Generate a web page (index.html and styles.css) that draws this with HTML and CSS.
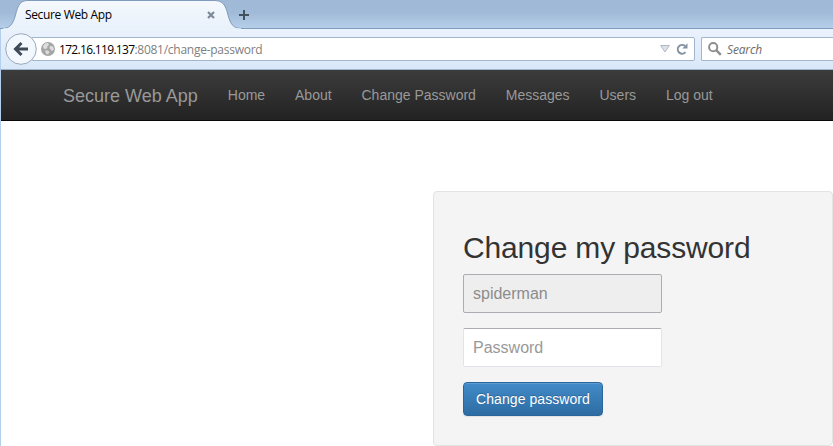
FILE: index.html
```
<!DOCTYPE html>
<html lang="en">
<head>
    <meta charset="UTF-8">
    <title>Secure Web App</title>
    <link rel="stylesheet" href="styles.css">
</head>

<body>
<div class="browser">
    <div class="tab-strip">
        <svg class="tab-shape" width="246" height="29" viewBox="0 0 246 29">
            <defs>
                <linearGradient id="tabfill" x1="0" y1="0" x2="0" y2="1">
                    <stop offset="0" stop-color="#f5f9fe"/>
                    <stop offset="1" stop-color="#e9f1fb"/>
                </linearGradient>
            </defs>
            <path d="M0 29V28.5H2C10 28.5 13 24 15.500 15C18 5 20 .5 28 .5H214C223 .5 225.500 5 228 15C230.500 24 233 28.500 242 28.5H246V29Z" fill="url(#tabfill)"/>
            <path d="M0 28.5H2C10 28.5 13 24 15.500 15C18 5 20 .5 28 .5H214C223 .5 225.500 5 228 15C230.500 24 233 28.500 242 28.5H246" fill="none" stroke="#7f9bbd"/>
            <path d="M3 29H241" stroke="#e9f1fb" stroke-width="1.5"/>
        </svg>
        <span class="tab-title">Secure Web App</span>
        <svg class="tab-close" width="8" height="8" viewBox="0 0 8 8">
            <path d="M1 1L7 7M7 1L1 7" stroke="#7d8a97" stroke-width="2.2"/>
        </svg>
        <svg class="tab-new" width="11" height="11" viewBox="0 0 11 11">
            <path d="M5 0V10M0 5H10" stroke="#43505e" stroke-width="2"/>
        </svg>
    </div>
    <div class="toolbar">
        <svg class="back" width="32" height="32" viewBox="0 0 32 32">
            <circle cx="16" cy="16" r="15.3" fill="#f3f8fe" stroke="#9aa9bb"/>
            <path d="M16.500 10L10.500 16L16.500 22M11 16H23" fill="none" stroke="#3e4a57" stroke-width="3"/>
        </svg>
        <div class="url-bar">
            <svg class="globe" width="14" height="14" viewBox="0 0 14 14">
                <circle cx="7" cy="7" r="7" fill="#a5a5a5"/>
                <path d="M2 4L4 1.5L7 1L8 3L6 4.5L6.5 6L4.5 7L2.5 6.5ZM9 4L12 4.5L13 7.5L11 9L9.5 7.5L8.5 6ZM4 8.5L7 8.5L8.5 10L7 12.5L5 11.5Z" fill="#dedede"/>
            </svg>
            <span class="url"><b>172.16.119.137</b>:8081/change-password</span>
            <svg class="dropdown" width="10" height="8" viewBox="0 0 10 8">
                <path d="M.7 .5H9.3L5 7Z" fill="#dde2e8" stroke="#b0b8c2"/>
            </svg>
            <svg class="reload" width="12" height="12" viewBox="0 0 12 12">
                <path d="M9.5 9.2A4.4 4.4 0 1 1 9 2.9" fill="none" stroke="#8493a3" stroke-width="2"/>
                <path d="M11.5 .3V5.5H6.3Z" fill="#8493a3"/>
            </svg>
        </div>
        <div class="search-bar">
            <svg width="14" height="14" viewBox="0 0 14 14">
                <circle cx="5.2" cy="5.2" r="4.1" fill="none" stroke="#8e8e8e" stroke-width="2"/>
                <path d="M8.2 8.2L12.8 12.8" stroke="#8e8e8e" stroke-width="2.4"/>
            </svg>
            <span>Search</span>
        </div>
    </div>
    <div class="page">
        <nav class="navbar">
            <a class="brand">Secure Web App</a>
            <a class="link">Home</a>
            <a class="link">About</a>
            <a class="link">Change Password</a>
            <a class="link">Messages</a>
            <a class="link">Users</a>
            <a class="link">Log out</a>
        </nav>
        <form class="well">
            <h2>Change my password</h2>
            <input class="field" type="text" value="spiderman" disabled>
            <input class="field" type="password" placeholder="Password">
            <button class="button" type="button">Change password</button>
        </form>
    </div>
</div>
</body>
</html>
```

FILE: styles.css
```
* {
    box-sizing: border-box;
}
body {
    margin: 0;
    background-color: white;
    overflow: hidden;
}
svg {
    display: block;
    flex: none;
}
.browser {
    height: 446px;
    font-family: "Open Sans", "Noto Sans", sans-serif;
    font-size: 12px;
}
.tab-strip {
    position: relative;
    display: flex;
    align-items: center;
    height: 29px;
    padding-left: 25px;
    background: linear-gradient(#a0b9d6, #a1bad7 45%, #b5cee9);
    border-bottom: 1px solid #7f9bbd;
}
.tab-shape {
    position: absolute;
    left: 0;
    top: 0;
}
.tab-title {
    position: relative;
    width: 182px;
    padding-top: 1px;
    color: black;
    letter-spacing: -0.35px;
    white-space: nowrap;
}
.tab-close {
    position: relative;
    margin-top: 2px;
}
.tab-new {
    position: relative;
    margin: 3px 0 0 24px;
}
.toolbar {
    display: flex;
    align-items: center;
    height: 41px;
    padding-left: 4px;
    background: linear-gradient(#eaf2fc, #d9e8f9);
    border-bottom: 1px solid #9fb4cd;
    border-left: 1px solid #b4cfee;
}
.back {
    position: relative;
    z-index: 1;
}
.url-bar {
    display: flex;
    align-items: center;
    width: 664px;
    height: 24px;
    margin-left: -6px;
    padding: 0 6px 0 9px;
    background-color: white;
    border: 1px solid #a3b5ca;
    border-radius: 2px;
}
.url {
    flex: 1;
    margin-left: 4px;
    color: #808080;
    letter-spacing: -0.26px;
    white-space: nowrap;
}
.url b {
    color: black;
    font-weight: normal;
    letter-spacing: -0.68px;
}
.reload {
    margin-left: 6px;
}
.search-bar {
    display: flex;
    align-items: center;
    flex: 1;
    height: 24px;
    margin-left: 6px;
    padding-left: 6px;
    background-color: white;
    border: 1px solid #a3b5ca;
    border-right: none;
    border-radius: 2px 0 0 2px;
    color: #6b6b6b;
    font-style: italic;
}
.search-bar span {
    margin-left: 5px;
    letter-spacing: -0.15px;
}
.page {
    height: 376px;
    border-left: 1px solid #b4cfee;
    font-family: "Liberation Sans", Arial, sans-serif;
    font-size: 14px;
}
.navbar {
    display: flex;
    align-items: center;
    height: 51px;
    padding-left: 47px;
    background: linear-gradient(#3c3c3c, #222222);
    border-bottom: 1px solid #080808;
    color: #999999;
}
.brand {
    padding: 2px 15px 0;
    font-size: 18px;
}
.link {
    padding: 0 14.9px 0 15px;
}
.well {
    display: flex;
    flex-direction: column;
    align-items: flex-start;
    width: 400px;
    height: 255px;
    margin: 70px 0 0 auto;
    padding: 39px 29px 0;
    background-color: #f4f4f4;
    border: 1px solid #e3e3e3;
    border-radius: 4px;
}
h2 {
    margin: 0 0 10px;
    color: #333333;
    font-size: 30px;
    font-weight: normal;
    letter-spacing: -0.15px;
    line-height: 33px;
}
.field {
    width: 199px;
    height: 39px;
    margin: 0 0 15px;
    padding: 0 9px;
    background-color: white;
    border: 1px solid #e1e4ec;
    border-top-color: #abadb3;
    border-radius: 2px;
    font-family: inherit;
    font-size: 16px;
}
.field::placeholder {
    color: #999999;
}
.field:disabled {
    background-color: #eeeeee;
    border-color: #abadb3;
    color: #8c8c8c;
}
.button {
    width: 140px;
    height: 34px;
    padding: 0;
    color: white;
    background: linear-gradient(#428bca, #2d6ca2);
    border: 1px solid #2b669a;
    border-radius: 4px;
    box-shadow: inset 0 1px 0 rgba(255, 255, 255, 0.15), 0 1px 1px rgba(0, 0, 0, 0.075);
    font-family: inherit;
    font-size: 14px;
    letter-spacing: 0.07px;
    text-shadow: 0 -1px 0 rgba(0, 0, 0, 0.2);
}
```
